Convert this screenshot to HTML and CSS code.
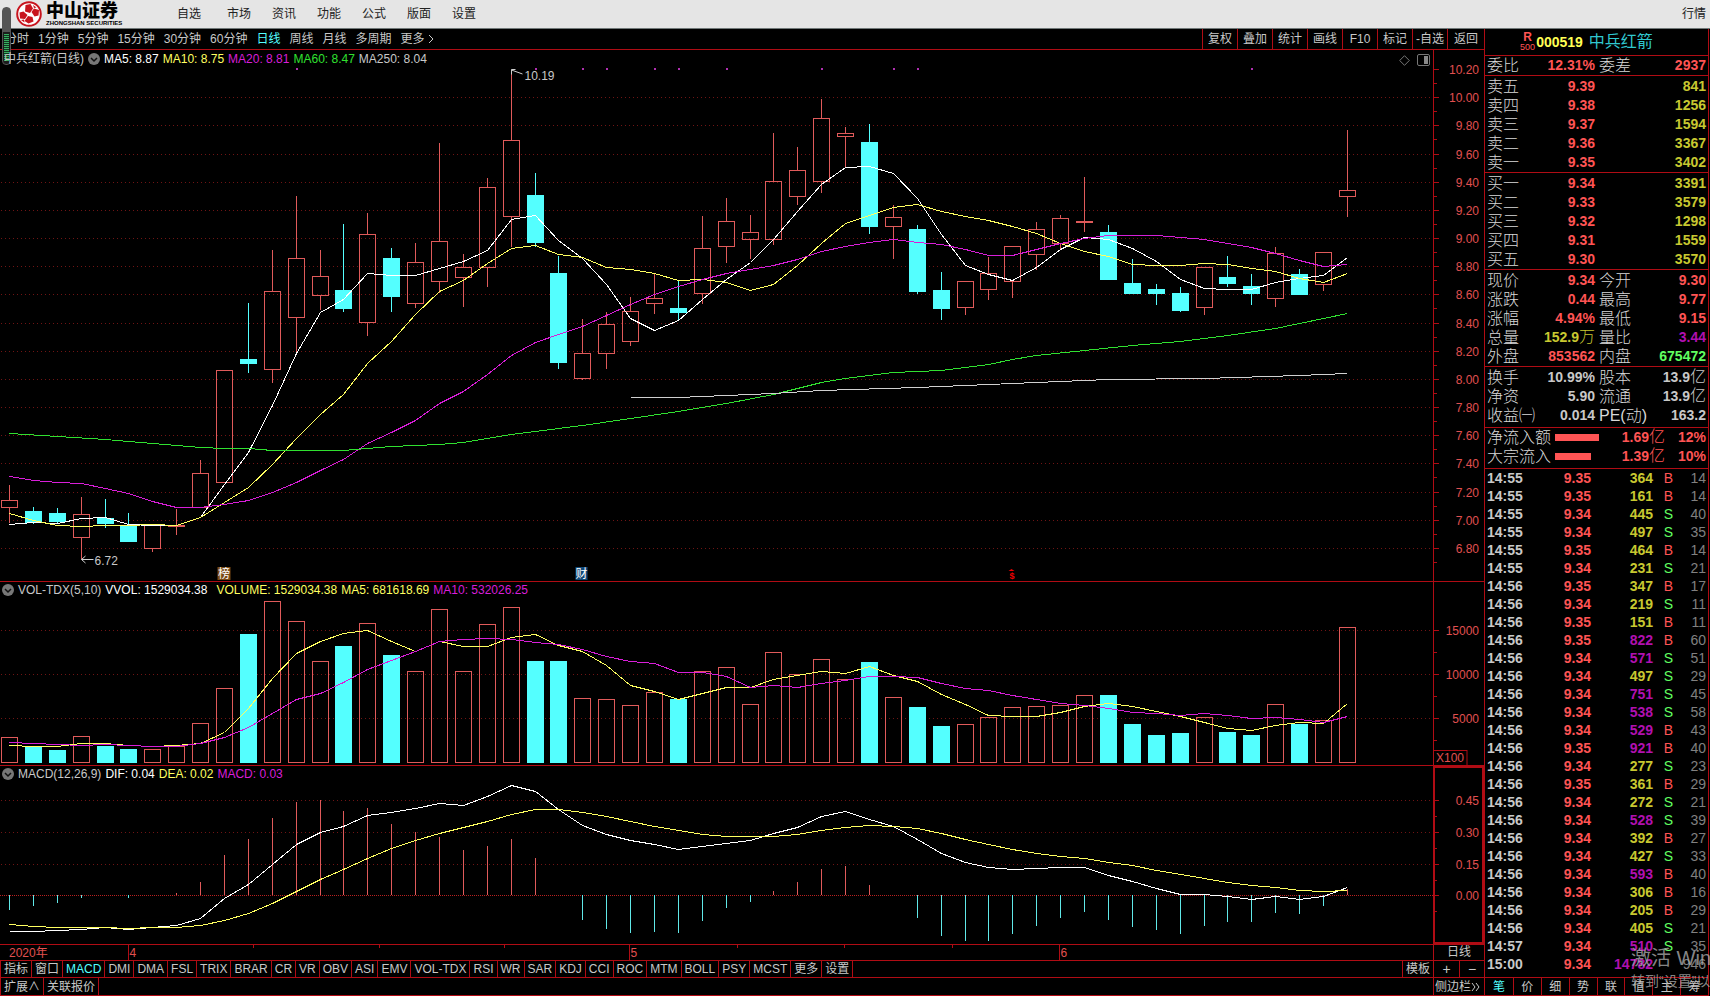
FILE: index.html
```html
<!DOCTYPE html>
<html lang="zh-CN">
<head>
<meta charset="utf-8">
<title>中兵红箭 日线</title>
<link rel="stylesheet" href="styles.css">
</head>
<body>
<div class="app">
  <header class="menubar">
    <div class="brand">
      <svg class="brand-mark" width="26" height="26" viewBox="0 0 26 26" aria-hidden="true">
        <circle cx="13" cy="13" r="11.8" fill="#fff" stroke="#c8141e" stroke-width="2"/>
        <g fill="#c8141e">
          <path d="M9.500 4l5-1 2.500 4.500-3 4.500-5-1.500z"/>
          <path d="M15.500 11l2.500-3.500 5 1.500-.5 5.500-4 1z"/>
          <path d="M3.500 11.500l4-1 4 3.500-2.500 4-5-.5z"/>
          <path d="M12 15l4.500 1 1 4.500-5 2-4-2.500z"/>
          <path d="M17 4l3.500 2.500-2.500 .5z"/>
          <path d="M5 19l3-.5 .5 3z"/>
        </g>
      </svg>
      <div class="brand-text"><strong>中山证券</strong><small>ZHONGSHAN SECURITIES</small></div>
    </div>
    <nav class="menu">
      <button>自选</button><button>市场</button><button>资讯</button><button>功能</button><button>公式</button><button>版面</button><button>设置</button>
    </nav>
    <button class="quotes-btn">行情</button>
  </header>

  <div class="meter" aria-hidden="true"><div class="meter-level"></div></div>

  <div class="body">
    <main class="charts">
      <div class="toolbar">
        <div class="periods">
          <button>分时</button><button>1分钟</button><button>5分钟</button><button>15分钟</button><button>30分钟</button><button>60分钟</button><button class="on">日线</button><button>周线</button><button>月线</button><button>多周期</button><button>更多<svg width="8" height="10" viewBox="0 0 8 10" aria-hidden="true"><path d="M2 1l4 4-4 4" fill="none" stroke="#c8c8c8"/></svg></button>
        </div>
        <div class="tools">
          <button>复权</button><button>叠加</button><button>统计</button><button>画线</button><button>F10</button><button>标记</button><button>-自选</button><button>返回</button>
        </div>
      </div>

      <section class="panel panel-price">
        <div class="plot">
          <svg id="price-plot"></svg>
          <div class="legend legend-price">
            <span>中兵红箭(日线)</span>
            <svg class="chev" width="12" height="12" viewBox="0 0 12 12" aria-hidden="true"><circle cx="6" cy="6" r="6" fill="#777"/><path d="M3 5l3 3 3-3" fill="none" stroke="#111" stroke-width="1.500"/></svg>
            <span class="white">MA5: 8.87</span><span class="yellow">MA10: 8.75</span><span class="magenta">MA20: 8.81</span><span class="green">MA60: 8.47</span><span>MA250: 8.04</span>
          </div>
          <div class="plot-tools">
            <svg width="11" height="11" viewBox="0 0 11 11" aria-hidden="true"><path d="M5.500 .7l4.800 4.800-4.800 4.800L.7 5.500z" fill="none" stroke="#777"/></svg>
            <svg width="13" height="12" viewBox="0 0 13 12" aria-hidden="true"><rect x=".5" y=".5" width="12" height="11" rx="1.500" fill="none" stroke="#777"/><rect x="7" y="2" width="4" height="8" fill="#888"/></svg>
          </div>
        </div>
        <svg class="axis" id="price-axis"></svg>
      </section>

      <section class="panel panel-vol">
        <div class="plot">
          <svg id="vol-plot"></svg>
          <div class="legend">
            <svg class="chev" width="12" height="12" viewBox="0 0 12 12" aria-hidden="true"><circle cx="6" cy="6" r="6" fill="#777"/><path d="M3 5l3 3 3-3" fill="none" stroke="#111" stroke-width="1.500"/></svg>
            <span>VOL-TDX(5,10)</span><span class="white wide">VVOL: 1529034.38</span><span class="yellow">VOLUME: 1529034.38</span><span class="yellow">MA5: 681618.69</span><span class="magenta">MA10: 532026.25</span>
          </div>
        </div>
        <svg class="axis" id="vol-axis"></svg>
      </section>

      <section class="panel panel-macd">
        <div class="plot">
          <svg id="macd-plot"></svg>
          <div class="legend">
            <svg class="chev" width="12" height="12" viewBox="0 0 12 12" aria-hidden="true"><circle cx="6" cy="6" r="6" fill="#777"/><path d="M3 5l3 3 3-3" fill="none" stroke="#111" stroke-width="1.500"/></svg>
            <span>MACD(12,26,9)</span><span class="white">DIF: 0.04</span><span class="yellow">DEA: 0.02</span><span class="magenta">MACD: 0.03</span>
          </div>
        </div>
        <svg class="axis axis-focus" id="macd-axis"></svg>
      </section>

      <div class="timeline">
        <svg id="time-axis"></svg>
        <div class="timeline-period">日线</div>
      </div>

      <div class="strip">
        <div class="tabs">
          <button>指标</button><button>窗口</button><button class="on">MACD</button><button>DMI</button><button>DMA</button><button>FSL</button><button>TRIX</button><button>BRAR</button><button>CR</button><button>VR</button><button>OBV</button><button>ASI</button><button>EMV</button><button>VOL-TDX</button><button>RSI</button><button>WR</button><button>SAR</button><button>KDJ</button><button>CCI</button><button>ROC</button><button>MTM</button><button>BOLL</button><button>PSY</button><button>MCST</button><button>更多</button><button>设置</button>
        </div>
        <div class="strip-end"><button>模板</button><button class="zoom">+</button><button class="zoom">−</button></div>
      </div>
      <div class="strip strip-last">
        <div class="tabs"><button>扩展∧</button><button>关联报价</button></div>
        <div class="strip-end"><button class="side">侧边栏<svg width="10" height="10" viewBox="0 0 10 10" aria-hidden="true"><path d="M1 1l3 4-3 4M5 1l3 4-3 4" fill="none" stroke="#c8c8c8"/></svg></button></div>
      </div>
    </main>

    <aside class="quote">
      <div class="quote-title">
        <span class="flags"><b>R</b><small>500</small></span>
        <span class="code">000519</span>
        <span class="name">中兵红箭</span>
      </div>
      <table class="grid grid-ratio">
        <tr><th>委比</th><td class="red">12.31%</td><th>委差</th><td class="red">2937</td></tr>
      </table>
      <table class="grid">
        <tr><th>卖五</th><td class="red">9.39</td><th></th><td class="gold">841</td></tr>
        <tr><th>卖四</th><td class="red">9.38</td><th></th><td class="gold">1256</td></tr>
        <tr><th>卖三</th><td class="red">9.37</td><th></th><td class="gold">1594</td></tr>
        <tr><th>卖二</th><td class="red">9.36</td><th></th><td class="gold">3367</td></tr>
        <tr><th>卖一</th><td class="red">9.35</td><th></th><td class="gold">3402</td></tr>
      </table>
      <table class="grid">
        <tr><th>买一</th><td class="red">9.34</td><th></th><td class="gold">3391</td></tr>
        <tr><th>买二</th><td class="red">9.33</td><th></th><td class="gold">3579</td></tr>
        <tr><th>买三</th><td class="red">9.32</td><th></th><td class="gold">1298</td></tr>
        <tr><th>买四</th><td class="red">9.31</td><th></th><td class="gold">1559</td></tr>
        <tr><th>买五</th><td class="red">9.30</td><th></th><td class="gold">3570</td></tr>
      </table>
      <table class="grid">
        <tr><th>现价</th><td class="red">9.34</td><th>今开</th><td class="red">9.30</td></tr>
        <tr><th>涨跌</th><td class="red">0.44</td><th>最高</th><td class="red">9.77</td></tr>
        <tr><th>涨幅</th><td class="red">4.94%</td><th>最低</th><td class="red">9.15</td></tr>
        <tr><th>总量</th><td class="gold">152.9<i>万</i></td><th>量比</th><td class="purple">3.44</td></tr>
        <tr><th>外盘</th><td class="red">853562</td><th>内盘</th><td class="lime">675472</td></tr>
      </table>
      <table class="grid grid-short">
        <tr><th>换手</th><td>10.99%</td><th>股本</th><td>13.9<i>亿</i></td></tr>
        <tr><th>净资</th><td>5.90</td><th>流通</th><td>13.9<i>亿</i></td></tr>
        <tr><th>收益㈠</th><td>0.014</td><th><b>PE(</b>动<b>)</b></th><td>163.2</td></tr>
      </table>
      <table class="flow">
        <tr><th>净流入额</th><td><div class="flow-bar" style="width:44px"></div></td><td class="red">1.69<i>亿</i></td><td class="red">12%</td></tr>
        <tr><th>大宗流入</th><td><div class="flow-bar" style="width:36px"></div></td><td class="red">1.39<i>亿</i></td><td class="red">10%</td></tr>
      </table>
      <table class="ticks"><tbody id="ticks"></tbody></table>
      <div class="quote-tabs">
        <button class="on">笔</button><button>价</button><button>细</button><button>势</button><button>联</button><button>值</button><button>主</button><button>筹</button>
      </div>
    </aside>
  </div>
  <div class="activate"><p>激活 Windows</p><small>转到“设置”以激活 Windows。</small></div>
</div>
<script src="charts.js"></script>
</body>
</html>
```
FILE: styles.css
```css
* { box-sizing: border-box; }
body {
  margin: 0;
  background: #fff;
  color: #c8c8c8;
  font: 12px/16px "Liberation Sans", "Noto Sans CJK SC", sans-serif;
}
button {
  border: 0;
  margin: 0;
  padding: 0;
  background: none;
  color: inherit;
  font: inherit;
  white-space: nowrap;
}
svg { display: block; }
i { font-style: normal; font-weight: 300; font-size: 16px; line-height: 16px; }

.white { color: #fff; }
.yellow { color: #ffff60; }
.magenta { color: #d81ed8; }
.green { color: #30e030; }
.red { color: #ff5454; }
.gold { color: #c8c830; }
.purple { color: #b010b0; }
.lime { color: #60ff60; }
.on { color: #54ffff; }

.app { position: relative; overflow: hidden; min-height: 100vh; }

/* top menu */
.menubar {
  display: flex;
  align-items: center;
  height: 29px;
  padding: 0 4px 0 16px;
  background: #e5e5e5;
  border-bottom: 1px solid #707878;
  color: #222;
}
.brand { display: flex; align-items: center; gap: 4px; width: 161px; color: #000; }
.brand-text { display: flex; flex-direction: column; }
.brand-text strong { font-size: 18px; line-height: 18px; font-weight: 900; }
.brand-text small { font-size: 6px; line-height: 7px; font-weight: 700; white-space: nowrap; }
.menu { display: flex; flex: 1; gap: 21px; }
.menu button:first-child { margin-right: 5px; }

.meter {
  position: absolute;
  left: 2px;
  top: 7px;
  width: 9px;
  height: 58px;
  padding: 26px 1px 3px;
  border: 1px solid #555;
  border-radius: 4px;
  background: linear-gradient(#555 24px, #1c1c1c 24px);
}
.meter-level { height: 100%; background: repeating-linear-gradient(#38b060 0 1px, #103820 1px 2px); }

.body { display: flex; background: #000; }
.charts { flex: 1; min-width: 0; display: flex; flex-direction: column; }

.toolbar {
  display: flex;
  justify-content: space-between;
  height: 21px;
  border-bottom: 1px solid #b00c14;
}
.periods { display: flex; gap: 9px; padding-left: 5px; }
.periods button { display: flex; align-items: center; gap: 2px; }
.tools { display: flex; }
.tools button { width: 35px; border-left: 1px solid #b00c14; }
.tools button:last-child { width: 37px; }

/* chart panels */
.panel { display: flex; border-bottom: 1px solid #b00c14; }
.panel-price { height: 532px; }
.panel-vol { height: 184px; }
.panel-macd { height: 179px; }
.plot { position: relative; flex: 1; min-width: 0; }
.plot > svg { width: 100%; height: 100%; }
.axis { width: 51px; height: 100%; flex: none; border-left: 1px solid #b00c14; }
.axis-focus { border: 2px solid #b00c14; }
.legend {
  position: absolute;
  left: 2px;
  top: 0;
  display: flex;
  align-items: center;
  gap: 4px;
  height: 16px;
  white-space: nowrap;
}
.legend-price { left: 4px; height: 18px; }
.wide { margin-right: 5px; }
.plot-tools { position: absolute; right: 3px; top: 4px; display: flex; align-items: center; gap: 7px; }
svg text { font: 12px "Liberation Sans", "Noto Sans CJK SC", sans-serif; }

.timeline { display: flex; height: 16px; border-bottom: 1px solid #b00c14; }
.timeline svg { flex: 1; min-width: 0; height: 15px; }
.timeline-period { width: 51px; border-left: 1px solid #b00c14; text-align: center; line-height: 15px; }

.strip { display: flex; justify-content: space-between; height: 17px; border-bottom: 1px solid #b00c14; }
.strip-last { height: 18px; }
.tabs, .strip-end { display: flex; }
.tabs { border-left: 1px solid #b00c14; }
.tabs button { padding: 0 3px; border-right: 1px solid #b00c14; line-height: 16px; }
.strip-end button { padding: 0 3px; border-left: 1px solid #b00c14; line-height: 16px; }
.strip-end .zoom { width: 26px; font-size: 14px; }
.strip-end .zoom + .zoom { width: 25px; }
.strip-end .side { display: flex; align-items: center; width: 51px; padding: 0 1px; }

/* quote panel */
.quote {
  width: 225px;
  flex: none;
  display: flex;
  flex-direction: column;
  border-left: 1px solid #b00c14;
  border-right: 1px solid #b00c14;
  margin-right: 1px;
}
.quote-title {
  display: flex;
  align-items: center;
  justify-content: center;
  height: 27px;
  padding-right: 20px;
  border-bottom: 1px solid #b00c14;
}
.flags { display: flex; flex-direction: column; align-items: center; color: #ff5454; }
.flags b { font-size: 12px; line-height: 10px; }
.flags small { font-size: 9px; line-height: 10px; }
.code { margin: 0 6px 0 1px; color: #ffff54; font-size: 14px; font-weight: 700; }
.name { color: #30c8d0; font-size: 16px; font-weight: 400; }

table { width: 100%; border-collapse: collapse; table-layout: fixed; }
th, td { padding: 0; height: 19px; line-height: 19px; white-space: nowrap; }
th { text-align: left; font-size: 16px; font-weight: 300; color: #d8d8d8; }
td { text-align: right; font-size: 14px; font-weight: 700; }
.grid, .flow { display: block; padding: 1px 2px 0; border-bottom: 1px solid #b00c14; }
.grid tr { display: grid; grid-template-columns: 50px 58px 4px 46px 1fr; }
.grid tr > :nth-child(3) { grid-column: 4; }
.grid tbody, .flow tbody { display: block; }
.grid-ratio { padding-top: 0; }
.grid-short { padding-bottom: 2px; }
.flow { padding: 0 2px 2px; }
.flow tr { display: grid; grid-template-columns: 68px 46px 1fr 41px; }
.flow-bar { height: 7px; margin-top: 6px; background: #ff5454; }
.ticks td { height: 18px; line-height: 18px; padding-right: 2px; }
.ticks td:nth-child(1) { width: 46px; text-align: left; padding-left: 2px; }
.ticks td:nth-child(2) { width: 62px; }
.ticks td:nth-child(3) { width: 62px; }
.ticks td:nth-child(4) { width: 20px; }
.ticks td:nth-child(5) { color: #808080; }
.ticks td:nth-child(4), .ticks td:nth-child(5) { font-weight: 400; }
.quote-tabs { display: grid; grid-template-columns: repeat(8, 1fr); margin-top: auto; border-top: 1px solid #b00c14; border-bottom: 1px solid #b00c14; height: 19px; }
.quote-tabs button + button { border-left: 1px solid #b00c14; }

.activate {
  position: absolute;
  left: calc(100% - 79px);
  top: 944px;
  color: rgba(170, 170, 170, .8);
  font-weight: 400;
  white-space: nowrap;
}
.activate p { margin: 0; font-size: 20px; line-height: 28px; }
.activate small { font-size: 14px; line-height: 18px; }
```
FILE: charts.js
```js
// Series are stored as y coordinates on the terminal's 1433-unit-wide canvas.
const CYAN = '#54ffff', RED = '#e05a5a', LINE = '#b00c14', GRID = '#701414';
const REF_W = 1433, FIRST = 9.5, STEP = 23.89;
const PRICE_TOP = 50, VOL_TOP = 582, MACD_TOP = 766;

// direction, high, body top, body bottom, low
const candles = `u485 500 507 523|d507 511 522 524|d508 513 521 523|u497 514 537 559|d499 518 523 528|d513 525 541 541|u525 525 548 552|u509 525 526 535|u460 473 507 507|u370 370 482 482|d303 359 363 373|u250 291 369 383|u196 258 317 353|u250 276 295 310|d224 290 308 312|u213 234 322 336|d248 258 296 312|u243 262 303 308|u143 241 281 293|u254 267 277 307|u178 187 267 287|u71 140 216 247|d173 195 242 247|d256 273 362 369|u319 353 378 380|u312 324 353 369|u297 311 341 346|u273 298 303 314|d281 308 312 320|u216 248 293 304|u198 221 246 263|u215 232 239 259|u133 181 239 245|u147 170 196 205|u99 118 181 193|u127 133 136 167|d124 142 226 234|u205 217 226 259|d225 229 291 294|d272 290 308 320|u281 281 307 315|u257 273 289 300|u246 246 281 298|u222 229 254 270|u215 218 243 249|u177 221 222 232|d225 232 279 280|d259 283 293 294|d284 289 293 305|d287 293 310 312|u267 267 307 315|d256 277 283 287|d274 286 293 305|u247 253 298 307|d269 274 294 294|u252 252 284 291|u130 190 196 217`
  .split('|').map(s => ({ up: s[0] === 'u', v: s.slice(1).split(' ').map(Number) }));

const nums = s => s.split(' ').map(Number);
const ma5 = nums('524 522 523 518 517 524 525 525 517 484 452 405 353 312 299 273 275 275 268 261 250 219 215 240 258 284 318 330 320 299 279 262 239 211 184 167 166 173 198 234 265 274 280 267 249 237 239 248 261 279 288 289 289 282 278 275 257');
const ma10 = nums('513 520 525 526 525 525 524 525 517 502 487 464 438 414 394 363 341 314 291 280 263 248 245 254 257 267 269 273 280 279 282 290 284 265 243 223 215 207 204 211 216 220 226 233 243 251 256 264 265 265 263 264 268 271 278 282 273');
const ma20 = nums('476 480 482 483 488 493 501 507 507 504 500 492 482 470 459 443 432 420 403 391 374 355 342 334 326 315 304 294 286 279 273 269 265 259 251 246 242 239 242 244 249 255 255 249 243 238 235 235 235 237 239 243 247 253 260 266 264');
const ma60 = [[0,433],[2,436],[4,439],[6,443],[8,447],[9,448],[10,448],[11,450],[14,450],[16,446],[18,444],[19,442],[20,438],[21,434],[22,431],[23,428],[24,425],[26,418],[28,411],[30,403],[32,394],[33,388],[34,382],[35,378],[37,372],[39,370],[41,364],[42,359],[43,355],[45,350],[47,345],[49,341],[51,335],[53,328],[55,318],[56,313]];
const ma250 = [[26,397],[28,397],[30,395],[32,393],[34,390],[38,387],[42,383],[46,379],[50,378],[54,375],[56,373]];
const dots = [12, 22, 24, 25, 27, 28, 30, 34, 37, 38, 52];

const vol = nums('737 746 750 736 746 749 749 746 723 688 634 601 621 661 646 623 655 671 609 671 624 607 661 661 698 699 705 692 699 671 667 704 652 674 659 679 662 697 707 726 724 717 707 706 705 695 695 724 735 733 717 732 735 704 724 720 627');
const vma5 = nums('745 746 746 743 743 745 746 745 743 732 708 678 653 641 633 630 641 651 641 646 646 637 634 645 651 665 685 691 699 693 687 687 679 675 671 673 666 675 681 694 704 715 716 716 712 706 703 706 711 716 722 728 730 725 722 723 703');
const vma10 = nums('742 743 744 745 744 745 746 746 743 737 727 713 699 693 682 669 660 651 641 639 638 639 642 644 649 656 661 663 672 672 676 687 685 687 683 680 676 676 677 683 688 690 695 699 703 705 708 712 713 715 713 715 718 717 719 722 716');

const dif = nums('931 931 930 929 927 929 927 925 918 898 884 864 844 832 826 815 812 808 803 805 796 785 791 809 825 834 840 844 849 846 843 840 833 827 816 811 819 826 839 853 862 867 869 868 867 867 875 881 888 894 894 896 899 896 899 896 887');
const dea = nums('924 926 927 927 927 928 927 927 925 920 913 903 891 879 869 858 848 840 833 827 821 814 809 809 812 816 821 826 830 834 836 836 836 834 830 827 825 826 828 833 839 844 849 853 856 858 862 865 870 874 878 882 885 887 890 891 890');
const hist = nums('910 906 903 898 0 898 0 893 882 855 839 818 802 800 811 808 824 832 837 850 846 839 858 0 920 929 933 932 933 921 908 902 891 882 869 866 885 0 918 936 941 941 934 926 918 912 920 927 930 934 926 922 922 913 914 906 889');

const line = (x1, y1, x2, y2, c, extra = '') =>
  `<path d="M${x1} ${y1}L${x2} ${y2}" stroke="${c}" shape-rendering="crispEdges" ${extra}/>`;
const text = (x, y, s, c, extra = '') => `<text x="${x}" y="${y}" fill="${c}" ${extra}>${s}</text>`;
const $ = id => document.getElementById(id);

function draw() {
  const w = $('price-plot').clientWidth;
  const k = w / REF_W;
  const x = i => Math.floor((FIRST + STEP * i) * k) + 0.5;
  const curve = (pts, top, c) => {
    const p = pts.map((v, i) => Array.isArray(v) ? `${x(v[0])},${v[1] - top + 0.5}` : `${x(i)},${v - top + 0.5}`);
    return `<polyline points="${p.join(' ')}" fill="none" stroke="${c}" shape-rendering="crispEdges"/>`;
  };
  const half = Math.round(8 * k);
  const box = (i, y1, y2, up) => up
    ? `<rect x="${x(i) - half}" y="${y1 + 0.5}" width="${2 * half}" height="${Math.max(1, y2 - y1)}" fill="none" stroke="${RED}" shape-rendering="crispEdges"/>`
    : `<rect x="${x(i) - half - 0.5}" y="${y1}" width="${2 * half + 1}" height="${Math.max(1, y2 - y1 + 1)}" fill="${CYAN}"/>`;
  const grid = y => line(1, y + 0.5, w, y + 0.5, GRID, 'stroke-dasharray="1 3"');

  // price
  let s = '', a = '';
  for (let n = 0; n <= 17; n++) {
    const y = Math.round(69 + n * 28.17) - PRICE_TOP;
    if (n) s += grid(y);
    a += line(0, y + 0.5, 5, y + 0.5, LINE) + line(0, y + 14.5, 3, y + 14.5, LINE);
    a += text(45, y + 5, (10.2 - n * 0.2).toFixed(2), '#e05050', 'text-anchor="end"');
  }
  candles.forEach(({ up, v }, i) => {
    const [h, t, b, l] = v.map(n => n - PRICE_TOP), c = up ? RED : CYAN;
    if (t > h) s += line(x(i), h, x(i), t, c);
    if (l > b) s += line(x(i), b, x(i), l, c);
    s += box(i, t, b, up);
  });
  s += curve(ma5, PRICE_TOP, '#fff') + curve(ma10, PRICE_TOP, '#ffff60') + curve(ma20, PRICE_TOP, '#d81ed8');
  s += curve(ma60, PRICE_TOP, '#30e030') + curve(ma250, PRICE_TOP, '#d0d0d0');
  dots.forEach(i => { s += `<rect x="${x(i) - 0.5}" y="18" width="2" height="2" fill="#b030b0"/>`; });
  s += `<path d="M${x(21) + 4} 19.500h-4v5M${x(21)} 20l11 4" fill="none" stroke="#d0d0d0"/>` + text(x(21) + 13, 30, '10.19', '#c8c8c8');
  s += `<path d="M${x(3) + 4} 506l-4 3.500 4 3.500M${x(3)} 509.500h12" fill="none" stroke="#d0d0d0"/>` + text(x(3) + 13, 515, '6.72', '#c8c8c8');
  s += `<rect x="${x(9) - 7}" y="517" width="13" height="13" fill="#7a4a14"/>` + text(x(9) - 6.5, 528, '榜', '#fff');
  s += `<rect x="${x(24) - 7}" y="517" width="12" height="13" fill="#104878"/>` + text(x(24) - 7, 528, '财', '#fff');
  s += `<path d="M${x(42) - 4} 521l3-2 3 2z" fill="#f00000"/>` + text(x(42) - 3, 529, '$', '#f00000', 'style="font-size:9px;font-weight:700"');
  $('price-plot').innerHTML = s;
  $('price-axis').innerHTML = a;

  // volume
  s = a = '';
  [[630, '15000'], [674, '10000'], [718, '5000']].forEach(([py, label]) => {
    const y = py - VOL_TOP;
    s += grid(y);
    a += line(0, y + 0.5, 5, y + 0.5, LINE) + line(0, y + 22.5, 3, y + 22.5, LINE);
    a += text(45, y + 5, label, '#e05050', 'text-anchor="end"');
  });
  a += `<rect x="-1" y="168.500" width="34" height="16" fill="none" stroke="${LINE}"/>` + text(2, 180, 'X100', '#e05050');
  vol.forEach((v, i) => { s += box(i, v - VOL_TOP, 762 - VOL_TOP, candles[i].up); });
  s += curve(vma5, VOL_TOP, '#ffff60') + curve(vma10, VOL_TOP, '#d81ed8');
  $('vol-plot').innerHTML = s;
  $('vol-axis').innerHTML = a;

  // MACD
  s = a = '';
  const zero = 895 - MACD_TOP;
  [[800, '0.45'], [832, '0.30'], [864, '0.15'], [895, '0.00']].forEach(([py, label]) => {
    const y = py - MACD_TOP;
    if (y < zero) s += grid(y);
    a += line(0, y - 1.5, 4, y - 1.5, LINE) + line(0, y + 14.5, 2, y + 14.5, LINE);
    a += text(44, y + 3, label, '#e05050', 'text-anchor="end"');
  });
  s += line(0, zero + 0.5, w, zero + 0.5, '#b82020', 'stroke-dasharray="1 1"');
  hist.forEach((v, i) => { if (v) s += line(x(i), zero, x(i), v - MACD_TOP, v > 895 ? '#60e8e8' : RED); });
  s += curve(dif, MACD_TOP, '#fff') + curve(dea, MACD_TOP, '#ffff60');
  $('macd-plot').innerHTML = s;
  $('macd-axis').innerHTML = a;

  // months and half-way ticks
  s = text(9, 12, '2020年', '#e05050');
  [[128, '4'], [629, '5'], [1059, '6']].forEach(([m, label]) => {
    const mx = Math.floor(m * k) + 0.5;
    s += line(mx, 0, mx, 15, LINE) + text(mx + 1, 12, label, '#e05050');
  });
  [253, 379, 504, 737, 844, 952].forEach(m => { s += line(Math.floor(m * k) + 0.5, 0, Math.floor(m * k) + 0.5, 3, LINE); });
  $('time-axis').innerHTML = s;
}

const trades = `14:55 9.35 364 B 14|14:55 9.35 161 B 14|14:55 9.34 445 S 40|14:55 9.34 497 S 35|14:55 9.35 464 B 14|14:55 9.34 231 S 21|14:56 9.35 347 B 17|14:56 9.34 219 S 11|14:56 9.35 151 B 11|14:56 9.35 822 B 60|14:56 9.34 571 S 51|14:56 9.34 497 S 29|14:56 9.34 751 S 45|14:56 9.34 538 S 58|14:56 9.34 529 B 43|14:56 9.35 921 B 40|14:56 9.34 277 S 23|14:56 9.35 361 B 29|14:56 9.34 272 S 21|14:56 9.34 528 S 39|14:56 9.34 392 B 27|14:56 9.34 427 S 33|14:56 9.34 593 B 40|14:56 9.34 306 B 16|14:56 9.34 205 B 29|14:56 9.34 405 S 21|14:57 9.34 510 S 35|15:00 9.34 14782  946`;
$('ticks').innerHTML = trades.split('|').map(row => {
  const [time, price, size, side, n] = row.split(' ');
  return `<tr><td>${time}</td><td class="red">${price}</td><td class="${size >= 500 ? 'purple' : 'gold'}">${size}</td>` +
    `<td class="${side === 'B' ? 'red' : 'lime'}">${side}</td><td>${n}</td></tr>`;
}).join('');

draw();
addEventListener('resize', draw);
```
